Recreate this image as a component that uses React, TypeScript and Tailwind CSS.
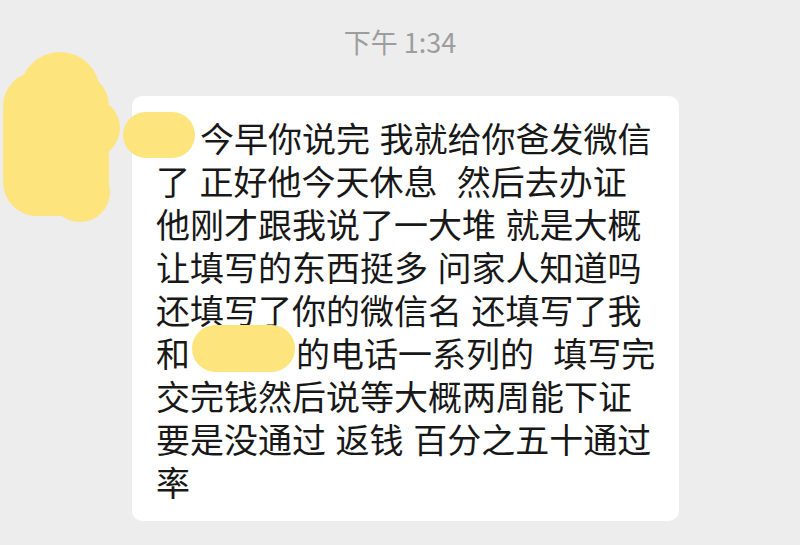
const lines = [
  "今早你说完 我就给你爸发微信",
  "了 正好他今天休息  然后去办证",
  "他刚才跟我说了一大堆 就是大概",
  "让填写的东西挺多 问家人知道吗",
  "还填写了你的微信名 还填写了我",
  "和",
  "交完钱然后说等大概两周能下证",
  "要是没通过 返钱 百分之五十通过",
  "率",
];

const AvatarBlot = () => (
  <svg
    className="absolute left-0 top-0"
    width="130"
    height="230"
    viewBox="0 0 130 230"
  >
    <g fill="#fde47c">
      <circle cx="60" cy="92" r="40" />
      <rect x="3" y="72" width="106" height="144" rx="34" />
      <circle cx="90" cy="128" r="30" />
      <circle cx="80" cy="192" r="30" />
      <circle cx="36" cy="184" r="31" />
    </g>
  </svg>
);

export default function App() {
  return (
    <div className="relative w-[800px] h-[545px] overflow-hidden bg-[#ededed] font-['Noto_Sans_CJK_SC',sans-serif]">
      {/* time */}
      <div className="pt-[24px] text-center text-[27px] leading-[35px] text-[#9d9d9d]">
        下午 1:34
      </div>

      <AvatarBlot />

      {/* bubble */}
      <div className="relative ml-[132px] mt-[37px] w-[547px] rounded-[10px] bg-white pl-[24px] pt-[20px] pb-[18px] text-[34px] leading-[43px] text-[#181818] whitespace-pre [word-spacing:2px]">
        {lines.map((line, i) => (
          <div key={i}>
            {i === 0 && <span className="inline-block w-[44px]" />}
            {line}
            {i === 5 && (
              <>
                <span className="inline-block w-[106px]" />
                {"的电话一系列的  填写完"}
              </>
            )}
          </div>
        ))}

        {/* redactions */}
        <div className="absolute left-[-9px] top-[16px] h-[46px] w-[72px] rounded-full bg-[#fde47c]" />
        <div className="absolute left-[60px] top-[229px] h-[47px] w-[103px] rounded-full bg-[#fde47c]" />
      </div>
    </div>
  );
}
